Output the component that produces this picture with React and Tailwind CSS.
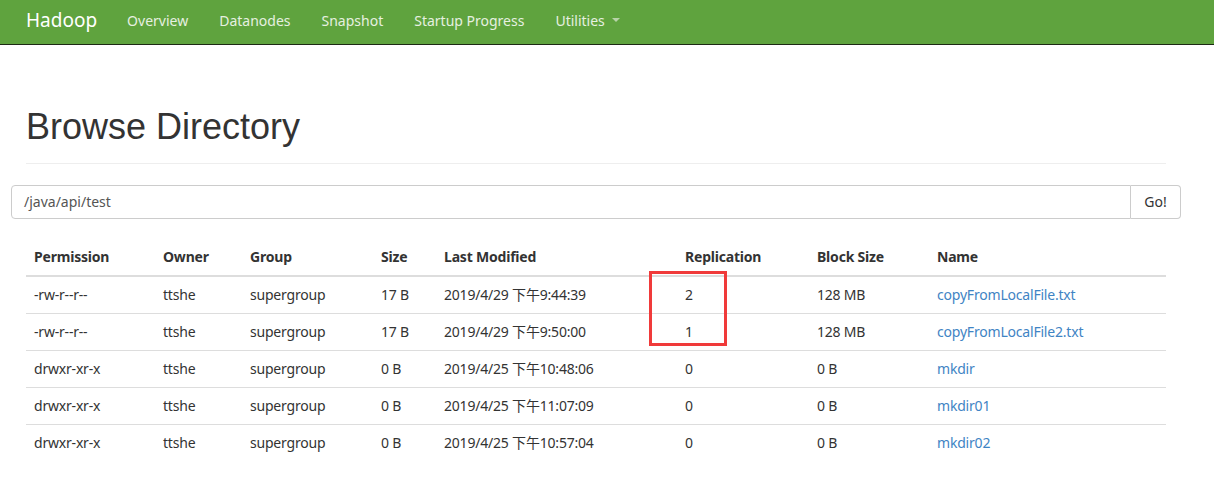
const rows = [
  { perm: '-rw-r--r--', owner: 'ttshe', group: 'supergroup', size: '17 B', modified: '2019/4/29 下午9:44:39', repl: '2', block: '128 MB', name: 'copyFromLocalFile.txt' },
  { perm: '-rw-r--r--', owner: 'ttshe', group: 'supergroup', size: '17 B', modified: '2019/4/29 下午9:50:00', repl: '1', block: '128 MB', name: 'copyFromLocalFile2.txt' },
  { perm: 'drwxr-xr-x', owner: 'ttshe', group: 'supergroup', size: '0 B', modified: '2019/4/25 下午10:48:06', repl: '0', block: '0 B', name: 'mkdir' },
  { perm: 'drwxr-xr-x', owner: 'ttshe', group: 'supergroup', size: '0 B', modified: '2019/4/25 下午11:07:09', repl: '0', block: '0 B', name: 'mkdir01' },
  { perm: 'drwxr-xr-x', owner: 'ttshe', group: 'supergroup', size: '0 B', modified: '2019/4/25 下午10:57:04', repl: '0', block: '0 B', name: 'mkdir02' },
]

const navLinks = ['Overview', 'Datanodes', 'Snapshot', 'Startup Progress']

function Navbar() {
  return (
    <nav className="h-[45px] bg-[#5fa33e] border-b border-[#1d2a14] flex items-center pb-[4px] pl-[26px] font-['Noto_Sans','Noto_Sans_CJK_SC',sans-serif]">
      <span className="text-[19px] text-white mr-[30px]">Hadoop</span>
      <div className="flex items-center gap-[31px] text-[14px] text-[#e6f0e0]">
        {navLinks.map((l) => (
          <span key={l}>{l}</span>
        ))}
        <span className="flex items-center gap-[7px]">
          Utilities
          <span className="w-0 h-0 border-l-[4px] border-r-[4px] border-t-[4px] border-l-transparent border-r-transparent border-t-[#b8d3a8]" />
        </span>
      </div>
    </nav>
  )
}

export default function App() {
  return (
    <div className="w-[1214px] h-[488px] bg-white overflow-hidden text-[#333] font-['Noto_Sans','Noto_Sans_CJK_SC',sans-serif]">
      <Navbar />

      <div className="px-[26px] w-[1192px]">
        <div className="pt-[62px] pb-[16px] border-b border-[#eee]">
          <h1 className="font-['Liberation_Sans',sans-serif] text-[36px] leading-[1.1] text-[#333]">Browse Directory</h1>
        </div>
      </div>

      {/* Path input */}
      <div className="mt-[21px] ml-[11px] w-[1170px] h-[34px] flex">
        <div className="flex-1 border border-[#ccc] rounded-l-[4px] flex items-center pl-[12px] text-[14px] text-[#555]">
          /java/api/test
        </div>
        <div className="w-[50px] border border-l-0 border-[#ccc] rounded-r-[4px] flex items-center justify-center text-[14px] text-[#333]">
          Go!
        </div>
      </div>

      {/* Listing */}
      <div className="relative ml-[26px] mt-[20px] w-[1140px]">
        <table className="w-full border-collapse text-[14px] leading-[20px] tracking-[-0.2px]">
          <thead>
            <tr className="border-b-2 border-[#ddd] text-left">
              <th className="w-[129px] p-[8px] font-bold">Permission</th>
              <th className="w-[87px] p-[8px] font-bold">Owner</th>
              <th className="w-[131px] p-[8px] font-bold">Group</th>
              <th className="w-[63px] p-[8px] font-bold">Size</th>
              <th className="w-[241px] p-[8px] font-bold">Last Modified</th>
              <th className="w-[132px] p-[8px] font-bold">Replication</th>
              <th className="w-[120px] p-[8px] font-bold">Block Size</th>
              <th className="p-[8px] font-bold">Name</th>
            </tr>
          </thead>
          <tbody>
            {rows.map((r, i) => (
              <tr key={r.name} className={i === 0 ? '' : 'border-t border-[#ddd]'}>
                <td className="p-[8px]">{r.perm}</td>
                <td className="p-[8px]">{r.owner}</td>
                <td className="p-[8px]">{r.group}</td>
                <td className="p-[8px]">{r.size}</td>
                <td className="p-[8px]">{r.modified}</td>
                <td className="p-[8px]">{r.repl}</td>
                <td className="p-[8px]">{r.block}</td>
                <td className="p-[8px] text-[#3f84c4]">{r.name}</td>
              </tr>
            ))}
          </tbody>
        </table>

        {/* annotation box around the replication values */}
        <div className="absolute left-[623px] top-[32px] w-[78px] h-[75px] border-[3px] border-[#f03a3a]" />
      </div>
    </div>
  )
}
